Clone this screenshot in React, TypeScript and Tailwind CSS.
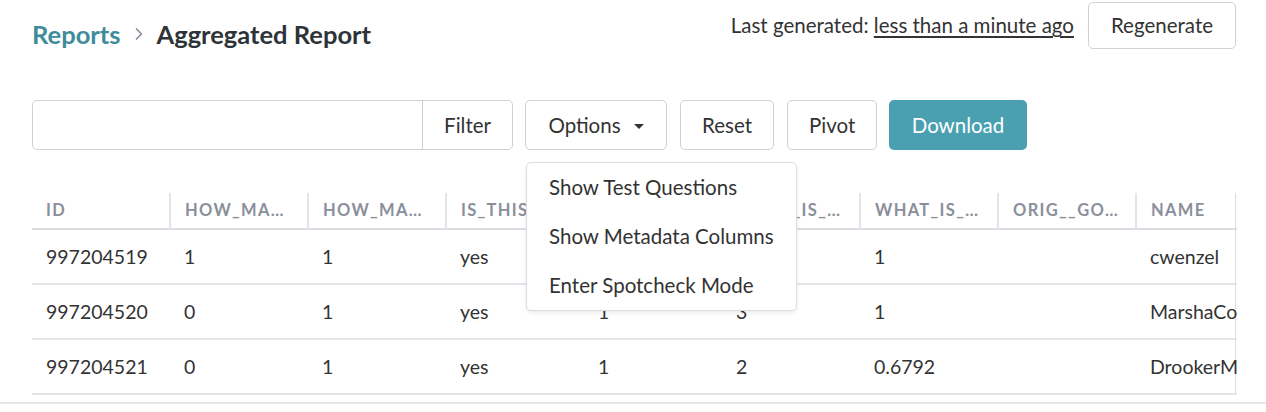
import { ChevronRight } from "lucide-react";

const font = { fontFamily: "Lato, 'Open Sans', sans-serif" };

const headers = [
  "ID",
  "HOW_MANY_WORKERS",
  "HOW_MANY_JUDGMENTS",
  "IS_THIS_RELEVANT",
  "IS_IT_POSITIVE",
  "WHAT_IS_THE_SENTIMENT",
  "WHAT_IS_THE_SCORE",
  "ORIG__GOLDEN",
  "NAME",
];

const rows = [
  ["997204519", "1", "1", "yes", "1", "3", "1", "", "cwenzel"],
  ["997204520", "0", "1", "yes", "1", "3", "1", "", "MarshaCooper"],
  ["997204521", "0", "1", "yes", "1", "2", "0.6792", "", "DrookerMiles"],
];

function Btn({ children, className = "" }: { children: React.ReactNode; className?: string }) {
  return (
    <button
      className={
        "h-[50px] px-[21px] rounded-[5px] border border-[#cfd0d8] bg-white text-[20.5px] text-[#333] " + className
      }
    >
      {children}
    </button>
  );
}

export default function App() {
  return (
    <div className="relative w-[1266px] h-[412px] overflow-hidden bg-white text-[#333]" style={font}>
      {/* Header */}
      <div className="flex items-start justify-between pl-[32px] pr-[30px] pt-[2px]">
        <div className="flex items-center gap-[8px] pt-[13px]">
          <span className="text-[25.5px] font-bold text-[#3f8c9b]">Reports</span>
          <ChevronRight className="h-[20px] w-[20px] text-[#8b8f9a]" strokeWidth={2} />
          <span className="text-[25.5px] font-bold text-[#2e3338]">Aggregated Report</span>
        </div>
        <div className="flex items-center gap-[14px]">
          <span className="text-[20.5px]">
            Last generated: <span className="underline underline-offset-[3px]">less than a minute ago</span>
          </span>
          <button className="h-[47px] px-[22px] rounded-[5px] border border-[#cfd0d8] bg-white text-[20.5px] text-[#333]">
            Regenerate
          </button>
        </div>
      </div>

      {/* Toolbar */}
      <div className="flex items-center gap-[13px] pl-[32px] mt-[47px]">
        <div className="flex h-[50px] w-[481px] mr-[-1px] rounded-[5px] border border-[#cfd0d8] bg-white">
          <input className="flex-1 min-w-0 outline-none px-3 bg-transparent" />
          <div className="flex items-center border-l border-[#cfd0d8] px-[21px] text-[20.5px]">Filter</div>
        </div>
        <Btn className="bg-[#f8f8fb] border-[#8c909c] flex items-center justify-center gap-[13px] w-[142px] px-0">
          Options
          <svg width="10" height="6" viewBox="0 0 10 6" className="mt-[3px]">
            <path d="M0 0h10L5 5z" fill="#333" />
          </svg>
        </Btn>
        <Btn className="w-[94px] px-0">Reset</Btn>
        <Btn className="w-[90px] px-0 mr-[-1px]">Pivot</Btn>
        <button className="h-[50px] w-[138px] rounded-[5px] bg-[#4aa0b1] text-white text-[20.5px]">Download</button>
      </div>

      {/* Table */}
      <div className="mt-[43px] ml-[32px] w-[1204px] border-r border-[#dcdde2]">
        <table className="table-fixed border-collapse w-full">
          <colgroup>
            {headers.map((h, i) => (
              <col key={h} className={i === headers.length - 1 ? "w-[101px]" : "w-[138px]"} />
            ))}
          </colgroup>
          <thead>
            <tr className="h-[36px] border-b-2 border-[#dcdde2]">
              {headers.map((h, i) => (
                <th
                  key={h}
                  className={
                    "text-left font-bold text-[16.5px] tracking-[0.08em] text-[#8a8f9b] pl-[14px] pr-[16px] truncate " +
                    (i > 0 ? "border-l-2 border-[#e4e5ea]" : "")
                  }
                >
                  {h}
                </th>
              ))}
            </tr>
          </thead>
          <tbody>
            {rows.map((r) => (
              <tr key={r[0]} className="h-[55px] border-b-2 border-[#e4e5ea]">
                {r.map((c, i) => (
                  <td key={i} className="px-[14px] text-[19.5px] text-[#333] whitespace-nowrap overflow-hidden">
                    {c}
                  </td>
                ))}
              </tr>
            ))}
          </tbody>
        </table>
      </div>
      <div className="mt-[7px] h-[2px] bg-[#e6e6ea]" />

      {/* Options dropdown */}
      <div className="absolute left-[526px] top-[162px] w-[271px] rounded-[5px] border border-[#dcdde2] bg-white shadow-[0_2px_4px_rgba(0,0,0,0.08)]">
        {["Show Test Questions", "Show Metadata Columns", "Enter Spotcheck Mode"].map((t) => (
          <div key={t} className="px-[22px] h-[49px] flex items-center text-[20.5px] text-[#333]">
            {t}
          </div>
        ))}
      </div>
    </div>
  );
}
